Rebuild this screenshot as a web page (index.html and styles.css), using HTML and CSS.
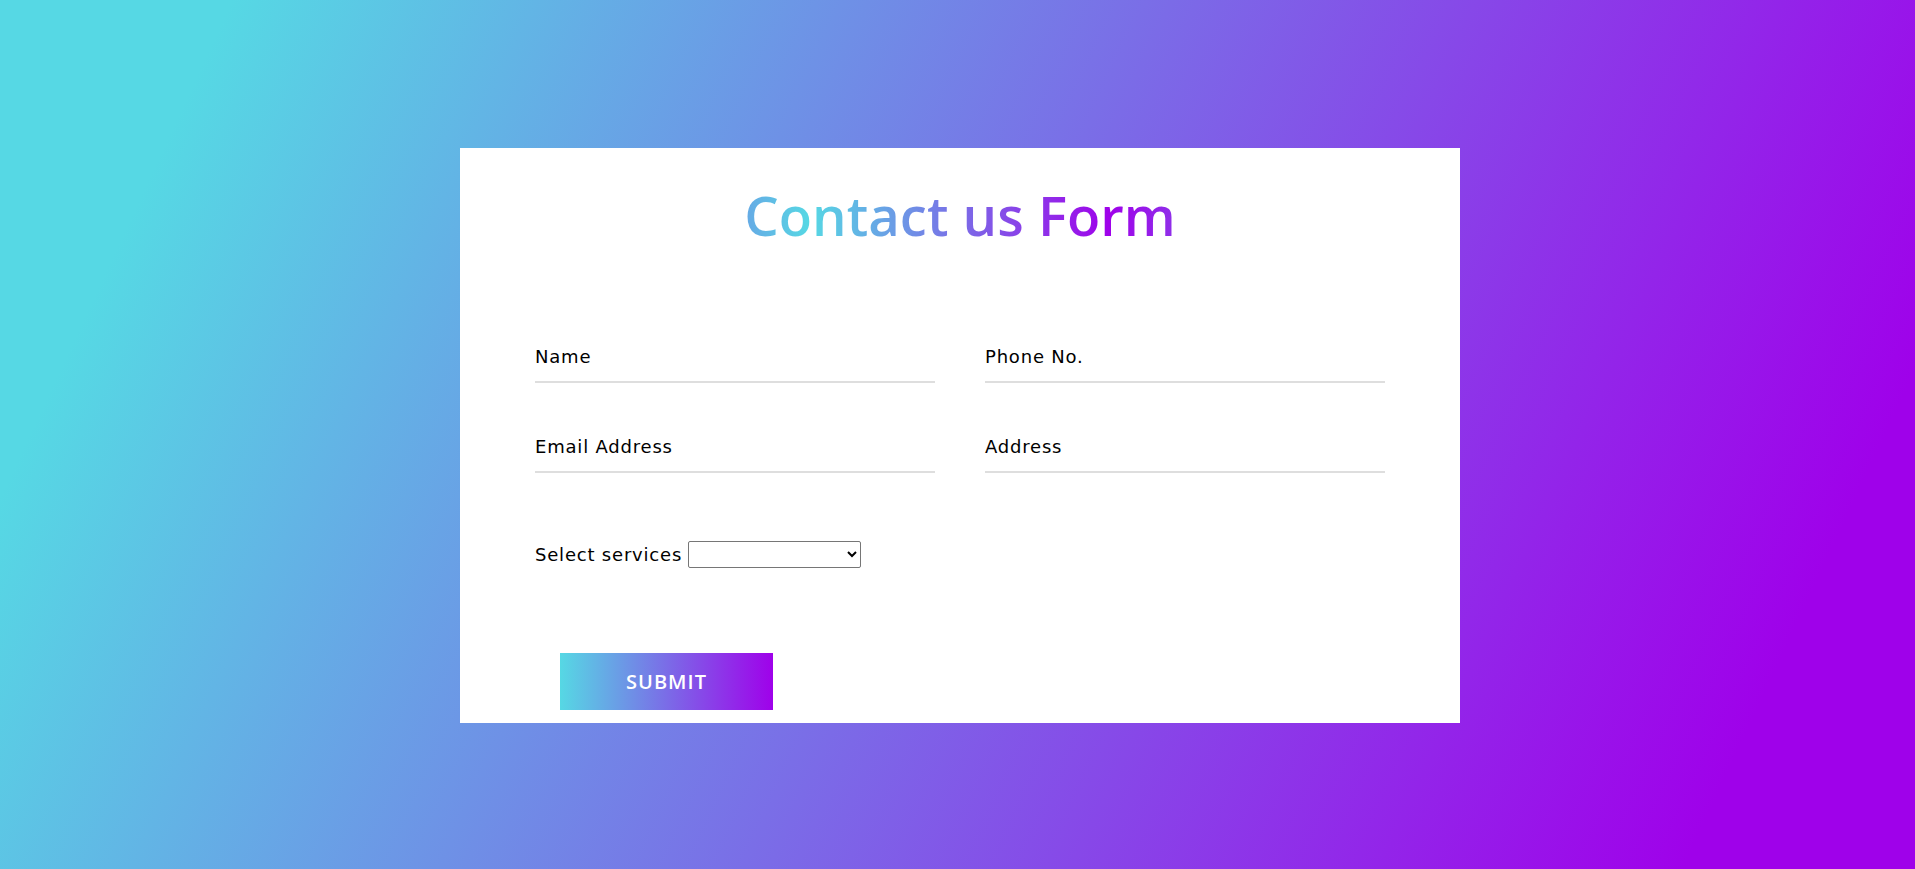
FILE: index.html
```html
<!DOCTYPE html>
<html lang="en">
<head>
<meta charset="utf-8">
<title>Contact us Form</title>
<link rel="stylesheet" href="styles.css">
</head>
<body>
<main class="page">
  <section class="card">
    <h1 class="title">Contact us Form</h1>
    <form class="form" action="#">
      <div class="row">
        <div class="field">
          <input class="field-input" type="text" required>
          <label class="field-label">Name</label>
          <div class="underline"></div>
        </div>
        <div class="field">
          <input class="field-input" type="text" required>
          <label class="field-label">Phone No.</label>
          <div class="underline"></div>
        </div>
      </div>
      <div class="row">
        <div class="field">
          <input class="field-input" type="text" required>
          <label class="field-label">Email Address</label>
          <div class="underline"></div>
        </div>
        <div class="field">
          <input class="field-input" type="text" required>
          <label class="field-label">Address</label>
          <div class="underline"></div>
        </div>
      </div>
      <div class="select-row">
        <label class="select-label" for="services">Select services</label>
        <select class="select" id="services">
          <option></option>
          <option>Web Design</option>
          <option>Development</option>
        </select>
      </div>
      <div class="submit-row">
        <button class="submit" type="submit">SUBMIT</button>
      </div>
    </form>
  </section>
</main>
</body>
</html>
```
FILE: styles.css
```css
* { box-sizing: border-box; }
html, body { margin: 0; padding: 0; }
body {
  font-family: "DejaVu Sans", "Open Sans", sans-serif;
  background: linear-gradient(115deg, #56d8e4 10%, #9f01ea 90%);
  min-height: 100vh;
}
.page {
  min-height: 869px;
  display: flex;
  align-items: center;
  justify-content: center;
  padding: 1px 0 0 5px;
}
.card {
  width: 1000px;
  height: 575px;
  background: #fff;
  padding: 31px 50px 13px;
}
.title {
  margin: 0;
  text-align: center;
  font-family: "Open Sans", sans-serif;
  font-size: 54.5px;
  font-weight: 600;
  line-height: 72px;
  background: linear-gradient(to left, #56d8e4, #9f01ea, #56d8e4, #9f01ea);
  -webkit-background-clip: text;
  background-clip: text;
  -webkit-text-fill-color: transparent;
  color: transparent;
}
.form {
  display: flex;
  flex-direction: column;
  padding-top: 92px;
}
.row {
  display: flex;
  gap: 50px;
  padding: 0 25px;
  margin-bottom: 50px;
}
.field {
  flex: 1;
  height: 40px;
  position: relative;
}
.field-input {
  width: 100%;
  height: 100%;
  border: none;
  outline: none;
  background: transparent;
  font: inherit;
  font-size: 18px;
}
.field-label {
  position: absolute;
  left: 0;
  bottom: 16px;
  font-size: 18px;
  line-height: normal;
  letter-spacing: 0.8px;
  color: #000;
  pointer-events: none;
}
.underline {
  position: absolute;
  left: 0;
  bottom: 0;
  width: 100%;
  height: 2px;
  background: #dedede;
}
.select-row {
  display: flex;
  align-items: center;
  gap: 6px;
  padding: 0 25px;
  margin-top: 18px;
}
.select-label {
  font-size: 18px;
  letter-spacing: 0.8px;
  color: #000;
}
.select {
  width: 173px;
  height: 27px;
  font-size: 15px;
  background: #fff;
  border: 1px solid #767676;
  border-radius: 2px;
}
.submit-row {
  padding: 0 50px;
  margin-top: 85px;
}
.submit {
  width: 213px;
  height: 57px;
  border: none;
  color: #fff;
  font-family: "Open Sans", sans-serif;
  font-size: 20px;
  font-weight: 600;
  letter-spacing: 1px;
  background: linear-gradient(to right, #56d8e4, #9f01ea);
  cursor: pointer;
}
```
